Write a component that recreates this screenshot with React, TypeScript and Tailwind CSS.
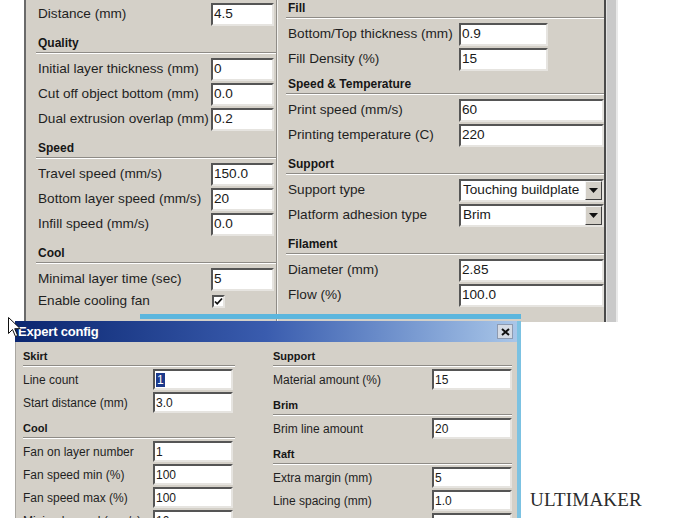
import React from "react";

const sans = "font-['Liberation_Sans',Arial,sans-serif]";

const sunken =
  "bg-white border-2 border-t-[#555] border-l-[#555] border-r-[#e6e4e0] border-b-[#e6e4e0]";

function Box({ value, w, h, selected }: { value: string; w: string; h: string; selected?: boolean }) {
  return (
    <div className={`${w} ${h} ${sunken} shrink-0 flex items-center pl-[1px] overflow-hidden whitespace-nowrap text-[#1a1a1a]`}>
      {selected ? <span className="bg-[#1c3a8c] text-white px-[1px] leading-[14px]">{value}</span> : value}
    </div>
  );
}

function Select({ value }: { value: string }) {
  return (
    <div className={`w-[145px] h-[23px] ${sunken} shrink-0 flex items-center`}>
      <span className="flex-1 pl-[2px] whitespace-nowrap overflow-hidden text-[#1a1a1a]">{value}</span>
      <div className="w-[17px] h-full shrink-0 bg-[#d4d0c8] border border-t-[#f4f4f4] border-l-[#f4f4f4] border-r-[#404040] border-b-[#404040] flex items-center justify-center">
        <svg width="9" height="5" viewBox="0 0 9 5">
          <path d="M0 0h9L4.5 5z" fill="#111" />
        </svg>
      </div>
    </div>
  );
}

function Check() {
  return (
    <div className={`w-[13px] h-[13px] ${sunken} flex items-center justify-center`}>
      <svg width="9" height="9" viewBox="0 0 9 9">
        <path d="M1 4.5l2.2 2.3L8 1.5" fill="none" stroke="#111" strokeWidth="1.8" />
      </svg>
    </div>
  );
}

function Heading({ title, h }: { title: string; h: string }) {
  return (
    <div className={`${h} flex flex-col justify-end pb-[3px]`}>
      <div className="font-bold text-[12px] leading-[14px] text-[#161616]">{title}</div>
      <div className="mt-[2px] -ml-[2px] border-t border-t-[#8e8b86] border-b border-b-white" />
    </div>
  );
}

function SmallHeading({ title }: { title: string }) {
  return (
    <div className="h-[26px] flex flex-col justify-end pb-[1px]">
      <div className="font-bold text-[11px] leading-[13px] text-[#161616]">{title}</div>
      <div className="mt-[2px] border-t border-t-[#8e8b86] border-b border-b-white" />
    </div>
  );
}

function Row({ label, lw, children }: { label: string; lw: string; children: React.ReactNode }) {
  return (
    <div className="h-[25px] flex items-center text-[13.6px]">
      <div className={`${lw} shrink-0 whitespace-nowrap overflow-hidden text-[#1f1f1f]`}>{label}</div>
      {children}
    </div>
  );
}

function SmallRow({ label, lw, children }: { label: string; lw: string; children: React.ReactNode }) {
  return (
    <div className="h-[23px] flex items-center text-[12px]">
      <div className={`${lw} shrink-0 whitespace-nowrap overflow-hidden text-[#1f1f1f]`}>{label}</div>
      {children}
    </div>
  );
}

function MainWindow() {
  const L = "w-[173px]";
  const R = "w-[171px]";
  return (
    <div className="absolute left-[24px] top-0 h-[322px] flex">
      <div className="w-[582px] h-full bg-[#d4d0c8] border-l-2 border-l-[#6a6a6a] border-r-2 border-r-[#4a4a4a] flex overflow-hidden">
        <div className="w-[250px] shrink-0 pl-[12px] pt-[2px]">
          <Row label="Distance (mm)" lw={L}><Box value="4.5" w="w-[63px]" h="h-[23px]" /></Row>
          <Heading title="Quality" h="h-[30px]" />
          <Row label="Initial layer thickness (mm)" lw={L}><Box value="0" w="w-[63px]" h="h-[23px]" /></Row>
          <Row label="Cut off object bottom (mm)" lw={L}><Box value="0.0" w="w-[63px]" h="h-[23px]" /></Row>
          <Row label="Dual extrusion overlap (mm)" lw={L}><Box value="0.2" w="w-[63px]" h="h-[23px]" /></Row>
          <Heading title="Speed" h="h-[30px]" />
          <Row label="Travel speed (mm/s)" lw={L}><Box value="150.0" w="w-[63px]" h="h-[23px]" /></Row>
          <Row label="Bottom layer speed (mm/s)" lw={L}><Box value="20" w="w-[63px]" h="h-[23px]" /></Row>
          <Row label="Infill speed (mm/s)" lw={L}><Box value="0.0" w="w-[63px]" h="h-[23px]" /></Row>
          <Heading title="Cool" h="h-[30px]" />
          <Row label="Minimal layer time (sec)" lw={L}><Box value="5" w="w-[63px]" h="h-[23px]" /></Row>
          <div className="h-[18px] flex items-center text-[13.6px]">
            <div className={`${L} shrink-0 text-[#1f1f1f]`}>Enable cooling fan</div>
            <div className="pl-[1px]"><Check /></div>
          </div>
        </div>
        <div className="w-px shrink-0 bg-[#8f8c87]" />
        <div className="w-px shrink-0 bg-[#f2f1ee]" />
        <div className="w-[326px] shrink-0 pl-[10px] -mt-[8px]">
          <Heading title="Fill" h="h-[30px]" />
          <Row label="Bottom/Top thickness (mm)" lw={R}><Box value="0.9" w="w-[89px]" h="h-[23px]" /></Row>
          <Row label="Fill Density (%)" lw={R}><Box value="15" w="w-[89px]" h="h-[23px]" /></Row>
          <Heading title="Speed & Temperature" h="h-[26px]" />
          <Row label="Print speed (mm/s)" lw={R}><Box value="60" w="w-[145px]" h="h-[23px]" /></Row>
          <Row label="Printing temperature (C)" lw={R}><Box value="220" w="w-[145px]" h="h-[23px]" /></Row>
          <Heading title="Support" h="h-[30px]" />
          <Row label="Support type" lw={R}><Select value="Touching buildplate" /></Row>
          <Row label="Platform adhesion type" lw={R}><Select value="Brim" /></Row>
          <Heading title="Filament" h="h-[30px]" />
          <Row label="Diameter (mm)" lw={R}><Box value="2.85" w="w-[145px]" h="h-[23px]" /></Row>
          <Row label="Flow (%)" lw={R}><Box value="100.0" w="w-[145px]" h="h-[23px]" /></Row>
        </div>
      </div>
      <div className="w-[12px] h-full bg-[#c9c9c9] border-l border-l-[#e2e2e2] border-r-2 border-r-[#e9e9e9]" />
    </div>
  );
}

function ExpertWindow() {
  const L = "w-[130px]";
  const R = "w-[159px]";
  return (
    <div className="absolute left-[15px] top-[321px] w-[506px] h-[220px] flex flex-col border-r-4 border-r-[#7cc2e2]">
      <div className="h-[21px] shrink-0 flex items-center justify-between pl-[3px] pr-[4px] bg-gradient-to-r from-[#0b2670] via-[#3a5cae] to-[#a9c6e8]">
        <span className="text-white text-[13px] font-bold tracking-[-0.2px]">Expert config</span>
        <div className="w-[16px] h-[15px] bg-[#d5dbe4] border border-[#8d9ab0] flex items-center justify-center">
          <svg width="9" height="8" viewBox="0 0 9 8">
            <path d="M1 1l7 6M8 1L1 7" stroke="#111" strokeWidth="2" />
          </svg>
        </div>
      </div>
      <div className="flex-1 bg-[#d4d0c8] border-l border-l-[#a9a6a0] flex pl-[7px]">
        <div className="w-[212px] shrink-0">
          <SmallHeading title="Skirt" />
          <SmallRow label="Line count" lw={L}><Box value="1" w="w-[80px]" h="h-[21px]" selected /></SmallRow>
          <SmallRow label="Start distance (mm)" lw={L}><Box value="3.0" w="w-[80px]" h="h-[21px]" /></SmallRow>
          <SmallHeading title="Cool" />
          <SmallRow label="Fan on layer number" lw={L}><Box value="1" w="w-[80px]" h="h-[21px]" /></SmallRow>
          <SmallRow label="Fan speed min (%)" lw={L}><Box value="100" w="w-[80px]" h="h-[21px]" /></SmallRow>
          <SmallRow label="Fan speed max (%)" lw={L}><Box value="100" w="w-[80px]" h="h-[21px]" /></SmallRow>
          <SmallRow label="Minimal speed (mm/s)" lw={L}><Box value="10" w="w-[80px]" h="h-[21px]" /></SmallRow>
        </div>
        <div className="w-[239px] shrink-0 ml-[38px]">
          <SmallHeading title="Support" />
          <SmallRow label="Material amount (%)" lw={R}><Box value="15" w="w-[80px]" h="h-[21px]" /></SmallRow>
          <SmallHeading title="Brim" />
          <SmallRow label="Brim line amount" lw={R}><Box value="20" w="w-[80px]" h="h-[21px]" /></SmallRow>
          <SmallHeading title="Raft" />
          <SmallRow label="Extra margin (mm)" lw={R}><Box value="5" w="w-[80px]" h="h-[21px]" /></SmallRow>
          <SmallRow label="Line spacing (mm)" lw={R}><Box value="1.0" w="w-[80px]" h="h-[21px]" /></SmallRow>
          <SmallRow label="Base thickness (mm)" lw={R}><Box value="0.3" w="w-[80px]" h="h-[21px]" /></SmallRow>
        </div>
      </div>
    </div>
  );
}

export default function App() {
  return (
    <div className={`relative w-[690px] h-[518px] overflow-hidden bg-white ${sans}`}>
      <MainWindow />
      <div className="absolute left-[140px] top-[314px] w-[381px] h-[5px] bg-[#5cb6de]" />
      <ExpertWindow />
      <div className="absolute left-[530px] top-[486px] font-['Liberation_Serif',serif] text-[19px] text-[#2b2b2b] tracking-[0.2px]">
        ULTIMAKER
      </div>
      <svg className="absolute left-[8px] top-[317px]" width="13" height="21" viewBox="0 0 13 21">
        <path d="M0.5 0.5v16l4-4 3 7 2.2-1-3-6.8h5.6z" fill="#fff" stroke="#111" strokeWidth="1" />
      </svg>
    </div>
  );
}
